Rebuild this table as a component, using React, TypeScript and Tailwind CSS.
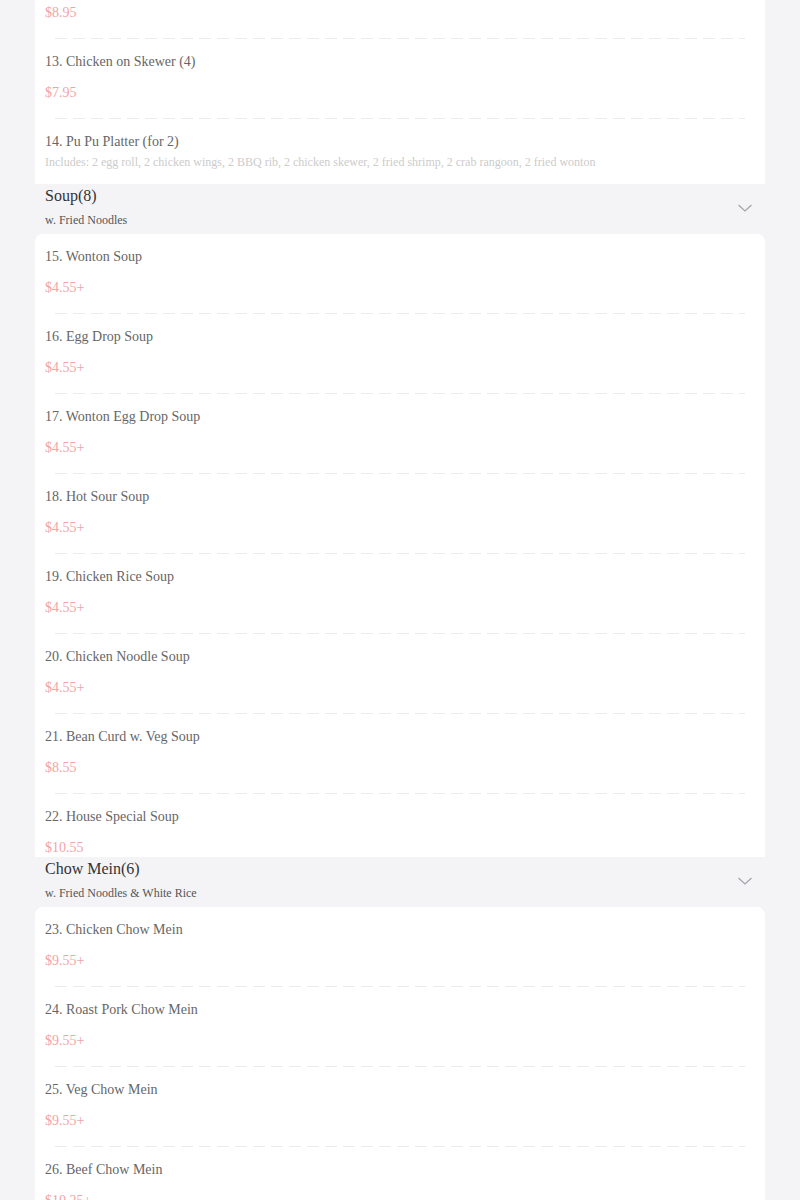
type Item = {
	name: string;
	price?: string;
	desc?: string;
};

type Section = {
	title?: string;
	subtitle?: string;
	items: Item[];
};

const sections: Section[] = [
	{
		items: [
			{ name: '12. Fried Shrimp (6)', price: '$8.95' },
			{ name: '13. Chicken on Skewer (4)', price: '$7.95' },
			{
				name: '14. Pu Pu Platter (for 2)',
				desc: 'Includes: 2 egg roll, 2 chicken wings, 2 BBQ rib, 2 chicken skewer, 2 fried shrimp, 2 crab rangoon, 2 fried wonton',
			},
		],
	},
	{
		title: 'Soup(8)',
		subtitle: 'w. Fried Noodles',
		items: [
			{ name: '15. Wonton Soup', price: '$4.55+' },
			{ name: '16. Egg Drop Soup', price: '$4.55+' },
			{ name: '17. Wonton Egg Drop Soup', price: '$4.55+' },
			{ name: '18. Hot Sour Soup', price: '$4.55+' },
			{ name: '19. Chicken Rice Soup', price: '$4.55+' },
			{ name: '20. Chicken Noodle Soup', price: '$4.55+' },
			{ name: '21. Bean Curd w. Veg Soup', price: '$8.55' },
			{ name: '22. House Special Soup', price: '$10.55' },
		],
	},
	{
		title: 'Chow Mein(6)',
		subtitle: 'w. Fried Noodles & White Rice',
		items: [
			{ name: '23. Chicken Chow Mein', price: '$9.55+' },
			{ name: '24. Roast Pork Chow Mein', price: '$9.55+' },
			{ name: '25. Veg Chow Mein', price: '$9.55+' },
			{ name: '26. Beef Chow Mein', price: '$10.25+' },
			{ name: '27. Shrimp Chow Mein', price: '$10.25+' },
			{ name: '28. House Special Chow Mein', price: '$10.95+' },
		],
	},
];

const Chevron = () => (
	<svg width="16" height="10" viewBox="0 0 16 10" fill="none">
		<path d="M1.5 2 L8 8 L14.5 2" stroke="#a3a3a8" strokeWidth="1.2" />
	</svg>
);

const MenuRow = ({ item, last }: { item: Item; last: boolean }) => (
	<div className="px-[10px] pt-[13px]">
		<div className="text-sm leading-5 text-[#666]">{item.name}</div>
		{item.price && (
			<div className="mt-[12px] text-sm leading-[18px] text-[#f2a4a4]">{item.price}</div>
		)}
		{item.desc && (
			<div className="mt-[2px] pb-[14px] text-xs leading-4 text-[#ccc] truncate">
				{item.desc}
			</div>
		)}
		{!last && (
			<div className="mx-[10px] pt-4">
				<div className="h-px bg-[linear-gradient(to_right,#ebebeb_65%,transparent_0)] bg-[length:18px_1px]"></div>
			</div>
		)}
	</div>
);

export default function App() {
	return (
		<div
			className="h-[1200px] overflow-hidden bg-[#f4f4f6] px-[35px]"
			style={{ fontFamily: '"Liberation Serif", "Times New Roman", serif' }}
		>
			<div className="-mt-[41px]">
				{sections.map((section, i) => (
					<div key={i}>
						{section.title && (
							<div className="flex items-center justify-between px-[10px] pb-[6px]">
								<div>
									<div className="text-base leading-6 text-[#333]">{section.title}</div>
									<div className="mt-1 text-xs leading-4 text-[#555]">
										{section.subtitle}
									</div>
								</div>
								<div className="mr-[2px] mt-[4px]">
									<Chevron />
								</div>
							</div>
						)}
						<div className="rounded-t-lg bg-white">
							{section.items.map((item, j) => (
								<MenuRow
									key={item.name}
									item={item}
									last={j === section.items.length - 1}
								/>
							))}
						</div>
					</div>
				))}
			</div>
		</div>
	);
}
